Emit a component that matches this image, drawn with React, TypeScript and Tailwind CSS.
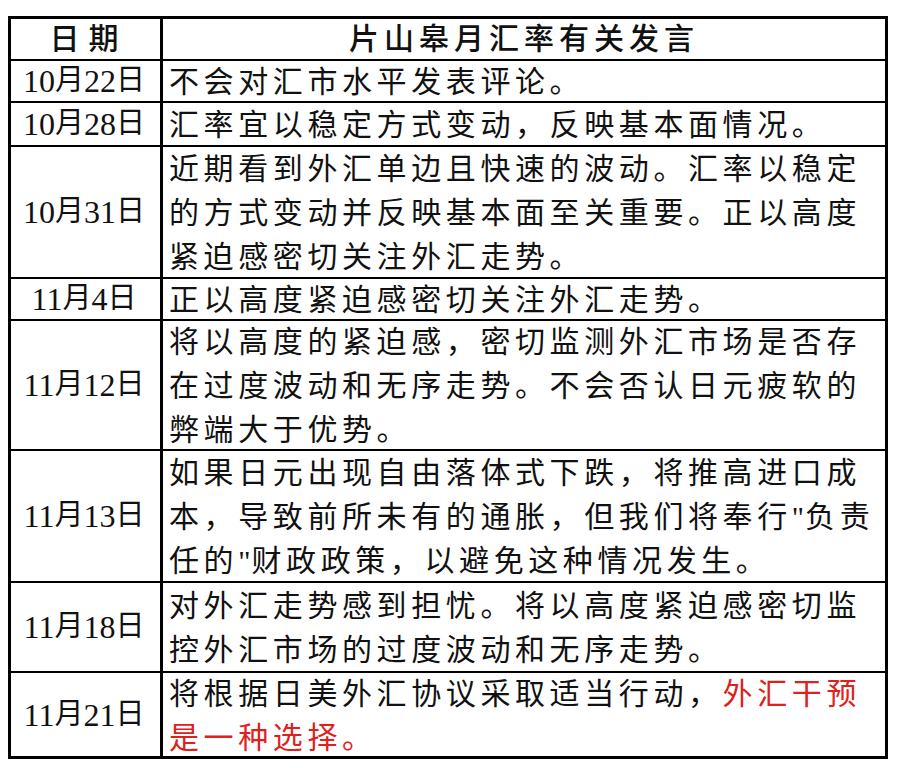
import React from 'react';

interface Row {
  date: [string, string];
  h: string;
  lines: React.ReactNode[];
}

const Q = () => <span className="tracking-[1px]">"</span>;

const rows: Row[] = [
  { date: ['10', '22'], h: 'h-[42px]', lines: ['不会对汇市水平发表评论。'] },
  { date: ['10', '28'], h: 'h-[44px]', lines: ['汇率宜以稳定方式变动，反映基本面情况。'] },
  {
    date: ['10', '31'],
    h: 'h-[132px]',
    lines: [
      '近期看到外汇单边且快速的波动。汇率以稳定',
      '的方式变动并反映基本面至关重要。正以高度',
      '紧迫感密切关注外汇走势。',
    ],
  },
  { date: ['11', '4'], h: 'h-[42px]', lines: ['正以高度紧迫感密切关注外汇走势。'] },
  {
    date: ['11', '12'],
    h: 'h-[130px]',
    lines: [
      '将以高度的紧迫感，密切监测外汇市场是否存',
      '在过度波动和无序走势。不会否认日元疲软的',
      '弊端大于优势。',
    ],
  },
  {
    date: ['11', '13'],
    h: 'h-[132px]',
    lines: [
      '如果日元出现自由落体式下跌，将推高进口成',
      <>本，导致前所未有的通胀，但我们将奉行<Q />负责</>,
      <>任的<Q />财政政策，以避免这种情况发生。</>,
    ],
  },
  {
    date: ['11', '18'],
    h: 'h-[90px]',
    lines: ['对外汇走势感到担忧。将以高度紧迫感密切监', '控外汇市场的过度波动和无序走势。'],
  },
  {
    date: ['11', '21'],
    h: 'h-[83px]',
    lines: [
      <>将根据日美外汇协议采取适当行动，<span className="text-[#e0201c]">外汇干预</span></>,
      <span className="text-[#e0201c]">是一种选择。</span>,
    ],
  },
];

const font = "font-['Liberation_Serif','Noto_Sans_CJK_SC',serif]";

export default function App() {
  return (
    <div className={`w-[898px] h-[768px] bg-white pt-[16px] pl-[8px] text-[#111] ${font}`}>
      <div className="w-[880px] border-[3px] border-black flex flex-col">
        {/* header */}
        <div className="flex h-[42px] border-b-2 border-black">
          <div className="w-[152px] border-r-[3px] border-black flex items-center justify-center text-[30px] font-medium tracking-[9px] pl-[6px] pb-[2px]">
            日期
          </div>
          <div className="flex-1 flex items-center justify-center text-[30px] font-medium tracking-[5px] pb-[2px]">
            片山皋月汇率有关发言
          </div>
        </div>

        {rows.map((r, i) => (
          <div
            key={r.date.join('-')}
            className={`flex ${r.h} ${i < rows.length - 1 ? 'border-b-2 border-black' : ''}`}
          >
            <div className="w-[152px] shrink-0 border-r-[3px] border-black flex items-center justify-center text-[29px] pr-[3px]">
              <span className="text-[32px]">{r.date[0]}</span>月<span className="text-[32px]">{r.date[1]}</span>日
            </div>
            <div className="flex-1 flex flex-col justify-center pl-[6px] pt-[2px] text-[30px] leading-[44px] tracking-[4.6px] whitespace-nowrap">
              {r.lines.map((l, j) => (
                <div key={j}>{l}</div>
              ))}
            </div>
          </div>
        ))}
      </div>
    </div>
  );
}
